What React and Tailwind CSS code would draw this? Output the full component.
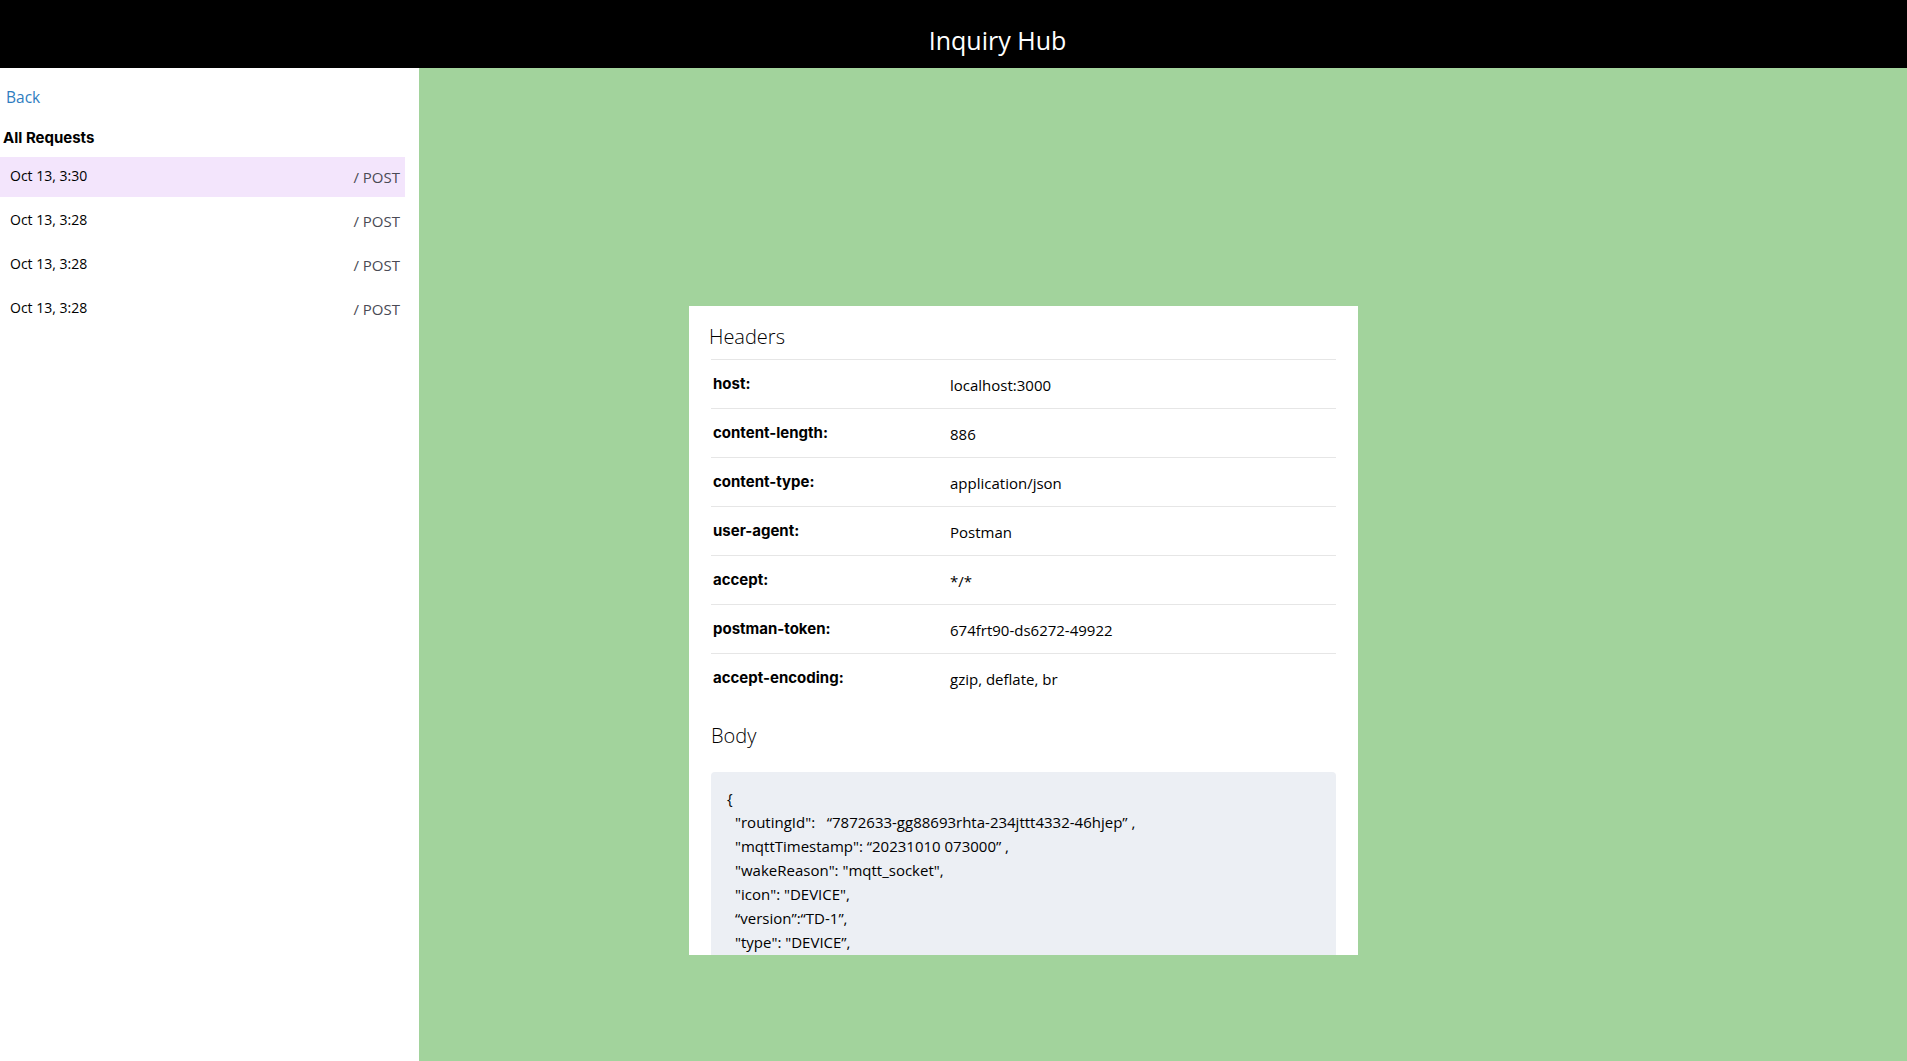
const requests = [
  { time: 'Oct 13, 3:30', method: '/ POST', active: true },
  { time: 'Oct 13, 3:28', method: '/ POST' },
  { time: 'Oct 13, 3:28', method: '/ POST' },
  { time: 'Oct 13, 3:28', method: '/ POST' },
];

const headers = [
  ['host:', 'localhost:3000'],
  ['content-length:', '886'],
  ['content-type:', 'application/json'],
  ['user-agent:', 'Postman'],
  ['accept:', '*/*'],
  ['postman-token:', '674frt90-ds6272-49922'],
  ['accept-encoding:', 'gzip, deflate, br'],
];

const bodyLines = [
  '"routingId":   \u201C7872633-gg88693rhta-234jttt4332-46hjep\u201D ,',
  '"mqttTimestamp": \u201C20231010 073000\u201D ,',
  '"wakeReason": "mqtt_socket",',
  '"icon": "DEVICE",',
  '\u201Cversion\u201D:\u201CTD-1\u201D,',
  '"type": "DEVICE\u201D,',
];

const sans = "font-['Open_Sans',sans-serif]";
const bold = "font-['Inter',sans-serif]";

export default function App() {
  return (
    <div className={`flex h-screen flex-col overflow-hidden ${sans}`}>
      {/* Top bar */}
      <header className="flex h-[68px] flex-shrink-0 items-center justify-center bg-black pl-[88px] pt-3">
        <h1 className="text-[25px] leading-none text-white">Inquiry Hub</h1>
      </header>

      <div className="flex flex-1 overflow-hidden">
        {/* Sidebar */}
        <aside className="w-[419px] flex-shrink-0 bg-white pr-[14px] pt-[17px]">
          <a href="#" className="block pl-[6px] text-[15.5px] leading-6 text-[#2f7dbf]">
            Back
          </a>
          <div className={`mt-[17px] pl-[3px] text-[15px] font-bold leading-6 text-black ${bold}`}>
            All Requests
          </div>
          <ul className="mt-[7px] flex flex-col gap-1">
            {requests.map((r, i) => (
              <li
                key={i}
                className={`flex h-10 items-center justify-between pl-[10px] pr-[5px] ${
                  r.active ? 'bg-[#f3e5fc]' : ''
                }`}
              >
                <span className="-mt-[3px] text-[14px] text-black">{r.time}</span>
                <span className="mt-[1px] text-[15px] text-[#4a4a55]">{r.method}</span>
              </li>
            ))}
          </ul>
        </aside>

        {/* Main */}
        <main className="flex-1 bg-[#a2d39c] pl-[270px] pt-[238px]">
          <div className="h-[649px] w-[669px] overflow-hidden bg-white px-[22px] pt-[17px]">
            <h2 className="-ml-[2px] text-[20px] font-light leading-7 text-black">Headers</h2>
            <div className="mt-2 border-t border-[#e6e6e6]">
              {headers.map(([k, v], i) => (
                <div
                  key={k}
                  className={`flex h-[49px] items-center pl-[2px] ${
                    i < headers.length - 1 ? 'border-b border-[#e6e6e6]' : ''
                  }`}
                >
                  <span className={`w-[237px] text-[15px] font-bold text-black ${bold}`}>{k}</span>
                  <span className="pt-[2px] text-[15px] text-black">{v}</span>
                </div>
              ))}
            </div>

            <h2 className="mt-[19px] text-[20px] font-light leading-7 text-black">Body</h2>
            <div className="mt-[22px] rounded bg-[#eceff4] pb-6 pl-4 pt-[14px] text-[15px] leading-6 text-black">
              <div>{'{'}</div>
              {bodyLines.map((l, i) => (
                <div key={i} className="whitespace-pre pl-2">
                  {l}
                </div>
              ))}
            </div>
          </div>
        </main>
      </div>
    </div>
  );
}
